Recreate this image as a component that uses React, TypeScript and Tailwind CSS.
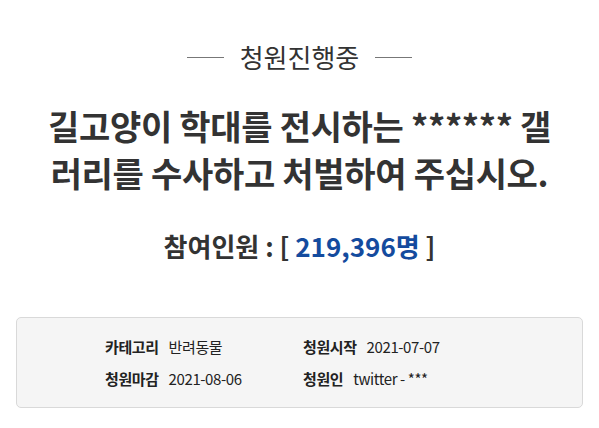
import React from "react";

export default function App() {
  return (
    <div className="w-[599px] h-[428px] bg-white text-[#333] font-['Noto_Sans_CJK_KR','Noto_Sans',sans-serif] overflow-hidden">
      <div className="pt-[41px]">
        <div className="flex items-center justify-center gap-[16px] h-[32px]">
          <div className="w-[37px] h-px bg-[#777]" />
          <span className="text-[26px] leading-[32px] text-[#333]">청원진행중</span>
          <div className="w-[37px] h-px bg-[#777]" />
        </div>
      </div>
      <h1 className="mt-[29px] text-[34px] font-bold leading-[47px] text-center text-[#333] tracking-[-0.3px]">
        길고양이 학대를 전시하는 ****** 갤
        <br />
        러리를 수사하고 처벌하여 주십시오.
      </h1>
      <div className="mt-[34px] text-center text-[26px] font-bold leading-[32px] text-[#333]">
        참여인원 : [ <span className="text-[#144b9e]">219,396명</span> ]
      </div>
      <div className="mx-[16px] mt-[55px] h-[91px] bg-[#f5f5f5] border border-[#d9d9d9] rounded-[5px] pl-[88px] pt-[13px] text-[15px] leading-[32px] text-[#222] tracking-[-0.4px]">
        <div className="grid grid-cols-[198px_auto]">
          <div className="flex gap-[10px]">
            <span className="font-bold">카테고리</span>
            <span>반려동물</span>
          </div>
          <div className="flex gap-[10px]">
            <span className="font-bold">청원시작</span>
            <span>2021-07-07</span>
          </div>
          <div className="flex gap-[10px]">
            <span className="font-bold">청원마감</span>
            <span>2021-08-06</span>
          </div>
          <div className="flex gap-[10px]">
            <span className="font-bold">청원인</span>
            <span>twitter - ***</span>
          </div>
        </div>
      </div>
    </div>
  );
}
